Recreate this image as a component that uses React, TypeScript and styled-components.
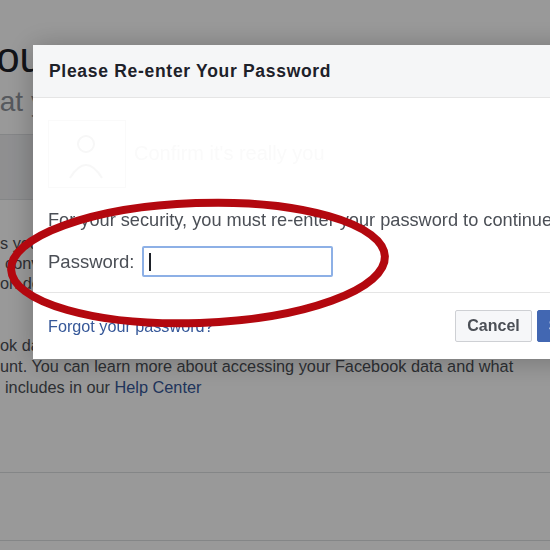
import React from "react";
import styled, { createGlobalStyle } from "styled-components";

const Global = createGlobalStyle`
  html, body { margin: 0; padding: 0; background: #ffffff; }
  body { font-family: "Liberation Sans", Arial, sans-serif; overflow: hidden; }
  #root { width: 550px; height: 550px; overflow: hidden; position: relative; }
`;

const Page = styled.div`
  width: 550px;
  height: 550px;
  overflow: hidden;
  background: #ffffff;
  color: #4b4f56;
  display: flex;
  flex-direction: column;
`;

const Hero = styled.div`
  padding: 34px 0 16px;
  display: flex;
  flex-direction: column;
  gap: 4px;
`;

const HeroTitle = styled.div`
  font-size: 42px;
  line-height: 48px;
  color: #1d2129;
  margin-left: -28px;
  white-space: nowrap;
`;

const HeroSub = styled.div`
  font-size: 28px;
  line-height: 32px;
  color: #90949c;
  margin-left: -36px;
  white-space: nowrap;
`;

const TabBar = styled.div`
  height: 64px;
  background: #eeeff1;
  border-top: 1px solid #dddfe2;
  border-bottom: 1px solid #dddfe2;
`;

const Section = styled.div<{ $top: number; $lh: number }>`
  padding-top: ${(p) => p.$top}px;
  display: flex;
  flex-direction: column;
  line-height: ${(p) => p.$lh}px;
`;

const Line = styled.div<{ $indent?: number }>`
  font-size: 16.3px;
  white-space: nowrap;
  color: #4b4f56;
  padding-left: ${(p) => p.$indent ?? 0}px;
`;

const Link = styled.span`
  color: #365899;
`;

const Rule = styled.div<{ $gap: number }>`
  margin-top: ${(p) => p.$gap}px;
  border-top: 1px solid #dddfe2;
`;

const Overlay = styled.div`
  position: fixed;
  inset: 0;
  background: rgba(0, 0, 0, 0.4);
`;

const Dialog = styled.div`
  position: fixed;
  left: 33px;
  top: 45px;
  width: 582px;
  background: #ffffff;
  box-shadow: 0 2px 26px rgba(0, 0, 0, 0.25);
  display: flex;
  flex-direction: column;
`;

const DialogHeader = styled.div`
  height: 53px;
  box-sizing: border-box;
  background: #f5f6f7;
  border-bottom: 1px solid #e5e5e5;
  display: flex;
  align-items: center;
  padding: 0 16px;
  font-size: 17.5px;
  letter-spacing: 0.7px;
  font-weight: bold;
  color: #1d2129;
`;

const DialogBody = styled.div`
  padding: 0 0 0 15px;
  display: flex;
  flex-direction: column;
`;

const Ghost = styled.div`
  height: 109px;
  display: flex;
  align-items: center;
  gap: 8px;
  padding-top: 2px;
  box-sizing: border-box;
  color: #fafafa;
  font-size: 20px;
`;

const Message = styled.div`
  font-size: 18.2px;
  line-height: 22px;
  color: #4b4f56;
  white-space: nowrap;
  margin-top: 2px;
`;

const FieldRow = styled.div`
  display: flex;
  align-items: center;
  gap: 8px;
  margin-top: 15px;
  padding-bottom: 15px;
`;

const Label = styled.label`
  font-size: 18.5px;
  color: #4b4f56;
`;

const Input = styled.div`
  width: 191px;
  height: 31px;
  box-sizing: border-box;
  border: 2px solid #8db0e6;
  border-radius: 2px;
  display: flex;
  align-items: center;
  padding-left: 5px;
`;

const Caret = styled.div`
  width: 1.5px;
  height: 18px;
  background: #1d2129;
`;

const DialogFooter = styled.div`
  border-top: 1px solid #e5e5e5;
  padding: 17px 0 17px 15px;
  display: flex;
  align-items: center;
`;

const ForgotLink = styled.span`
  font-size: 16.2px;
  color: #365899;
  flex: 1;
`;

const Buttons = styled.div`
  display: flex;
  gap: 5px;
`;

const Button = styled.div<{ $primary?: boolean }>`
  height: 32px;
  box-sizing: border-box;
  padding: 0 11px;
  display: flex;
  align-items: center;
  font-size: 16px;
  font-weight: bold;
  border-radius: 2px;
  border: 1px solid ${(p) => (p.$primary ? "#4267b2" : "#ced0d4")};
  background: ${(p) => (p.$primary ? "#4267b2" : "#f6f7f9")};
  color: ${(p) => (p.$primary ? "#ffffff" : "#4b4f56")};
`;

const Annotation = styled.svg`
  position: fixed;
  left: 0;
  top: 0;
  pointer-events: none;
`;

export default function App() {
  return (
    <>
      <Global />
      <Page>
        <Hero>
          <HeroTitle>Your</HeroTitle>
          <HeroSub>what you've shared</HeroSub>
        </Hero>
        <TabBar />
        <Section $top={33} $lh={20}>
          <Line>s your information</Line>
          <Line $indent={5}>convenient</Line>
          <Line>on device</Line>
        </Section>
        <Section $top={42} $lh={21}>
          <Line>ok data</Line>
          <Line>unt. You can learn more about accessing your Facebook data and what</Line>
          <Line $indent={5}>
            includes in our <Link>Help Center</Link>
          </Line>
        </Section>
        <Rule $gap={74} />
        <Rule $gap={67} />
      </Page>
      <Overlay />
      <Dialog>
        <DialogHeader>Please Re-enter Your Password</DialogHeader>
        <DialogBody>
          <Ghost>
            <svg width="78" height="68" viewBox="0 0 78 68">
              <rect x="0.5" y="0.5" width="77" height="67" fill="none" stroke="#fafafa" strokeWidth="1" />
              <circle cx="38" cy="24" r="8" fill="none" stroke="#f7f7f7" strokeWidth="2" />
              <path d="M22 58 Q38 32 54 58" fill="none" stroke="#f7f7f7" strokeWidth="2" />
            </svg>
            <span>Confirm it's really you</span>
          </Ghost>
          <Message>For your security, you must re-enter your password to continue.</Message>
          <FieldRow>
            <Label>Password:</Label>
            <Input>
              <Caret />
            </Input>
          </FieldRow>
        </DialogBody>
        <DialogFooter>
          <ForgotLink>Forgot your password?</ForgotLink>
          <Buttons>
            <Button>Cancel</Button>
            <Button $primary>Submit</Button>
          </Buttons>
        </DialogFooter>
      </Dialog>
      <Annotation width="550" height="550" viewBox="0 0 550 550">
        <ellipse
          cx="198"
          cy="263"
          rx="187"
          ry="60"
          fill="none"
          stroke="#b3080f"
          strokeWidth="8"
          transform="rotate(-2 198 263)"
        />
      </Annotation>
    </>
  );
}
